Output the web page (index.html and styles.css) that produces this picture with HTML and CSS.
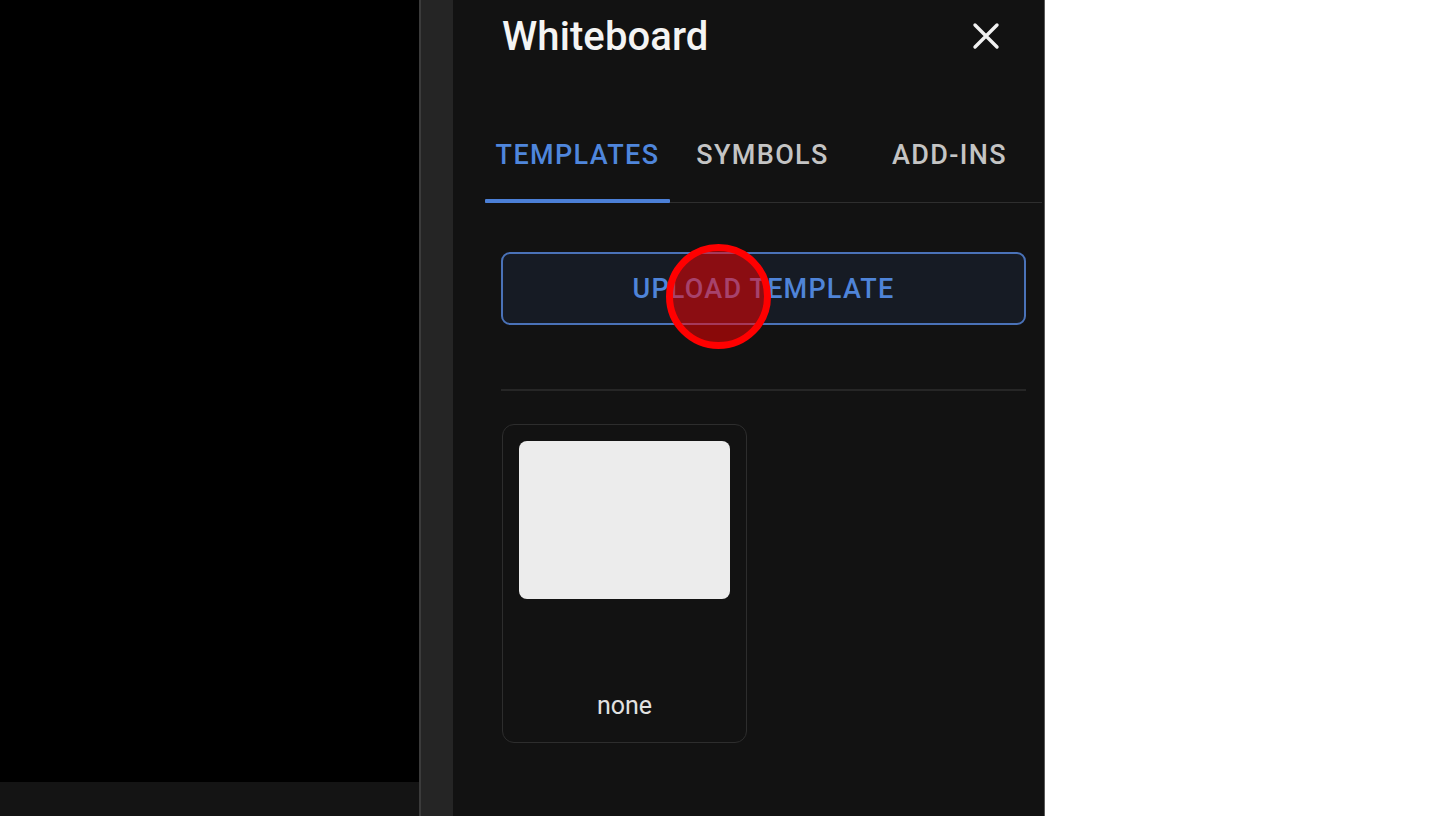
FILE: index.html
```html
<!DOCTYPE html>
<html lang="en">
<head>
<meta charset="utf-8">
<title>Whiteboard</title>
<link rel="stylesheet" href="styles.css">
</head>
<body>
<div class="app">
  <div class="stage">
    <div class="canvas"></div>
    <div class="statusbar"></div>
  </div>
  <div class="splitter"></div>
  <div class="rail"></div>
  <aside class="panel">
    <header class="panel-header">
      <h1 class="panel-title">Whiteboard</h1>
      <button class="close-btn" aria-label="Close">
        <svg viewBox="0 0 28 28" width="28" height="28"><path d="M3 3 L25 25 M25 3 L3 25" stroke="#f2f2f2" stroke-width="3.4" stroke-linecap="round" fill="none"/></svg>
      </button>
    </header>
    <nav class="tabs">
      <div class="tab active">TEMPLATES</div>
      <div class="tab">SYMBOLS</div>
      <div class="tab">ADD-INS</div>
    </nav>
    <section class="content">
      <div class="upload-wrap">
        <button class="upload-btn">UPLOAD TEMPLATE</button>
        <span class="click-marker"></span>
      </div>
      <hr class="divider">
      <div class="templates">
        <div class="template-card">
          <div class="template-thumb"></div>
          <div class="template-name">none</div>
        </div>
      </div>
    </section>
  </aside>
  <div class="blank"></div>
</div>
</body>
</html>
```

FILE: styles.css
```css
* { box-sizing: border-box; }
html, body { margin: 0; padding: 0; height: 100%; }
body {
  font-family: Roboto, "Liberation Sans", Arial, sans-serif;
  background: #ffffff;
  overflow: hidden;
}
.app {
  display: flex;
  width: 1450px;
  height: 816px;
}
.stage {
  width: 419px;
  display: flex;
  flex-direction: column;
}
.canvas { flex: 1; background: #000000; }
.statusbar { height: 34px; background: #141414; }
.splitter { width: 2px; background: #3b3b3b; }
.rail { width: 32px; background: #252525; }
.panel {
  width: 592px;
  background: #121212;
  display: flex;
  flex-direction: column;
  border-right: 1px solid #5a5a5a;
}
.panel-header {
  display: flex;
  align-items: center;
  justify-content: space-between;
  padding: 13px 44px 0 49px;
  height: 61px;
}
.panel-title {
  margin: 0;
  font-size: 40px;
  line-height: 48px;
  font-weight: 500;
  color: #f4f4f4;
  letter-spacing: 0.1px;
}
.close-btn {
  background: none;
  border: 0;
  padding: 0;
  width: 28px;
  height: 28px;
  display: flex;
  cursor: pointer;
  margin-top: -3px;
}
.tabs {
  display: flex;
  margin: 48px 2px 0 32px;
  border-bottom: 1px solid #2e2e2e;
}
.tab {
  position: relative;
  width: 185px;
  height: 93px;
  display: flex;
  align-items: center;
  justify-content: center;
  font-size: 27px;
  font-weight: 500;
  letter-spacing: 1.35px;
  color: #c4c4c4;
  padding-bottom: 2px;
}
.tab:nth-child(3) { padding-left: 4px; }
.tab.active { color: #4f86dc; }
.tab.active::after {
  content: "";
  position: absolute;
  left: 0;
  right: 0;
  bottom: -1px;
  height: 4px;
  background: #4b7fd6;
  border-radius: 1px;
}
.content {
  padding: 49px 18px 0 48px;
}
.upload-wrap { position: relative; }
.upload-btn {
  width: 100%;
  height: 73px;
  background: #161b24;
  border: 2px solid #4a72b8;
  border-radius: 9px;
  color: #4f84d8;
  font-family: Roboto, "Liberation Sans", Arial, sans-serif;
  font-size: 27px;
  font-weight: 500;
  letter-spacing: 1.2px;
  padding-top: 2px;
}
.click-marker {
  position: absolute;
  left: 165px;
  top: -8px;
  width: 105px;
  height: 105px;
  border-radius: 50%;
  border: 7px solid #ff0000;
  background: rgba(255, 0, 0, 0.5);
}
.divider {
  margin: 64px 0 0 0;
  border: 0;
  height: 2px;
  background: #262626;
}
.templates {
  display: flex;
  padding: 33px 0 0 1px;
}
.template-card {
  width: 245px;
  height: 319px;
  border: 1px solid #2d2d2d;
  border-radius: 12px;
  padding: 16px 16px 0 16px;
  display: flex;
  flex-direction: column;
  align-items: center;
}
.template-thumb {
  width: 211px;
  height: 158px;
  background: #ececec;
  border-radius: 8px;
}
.template-name {
  margin-top: 92px;
  font-size: 25px;
  color: #e2e2e2;
  line-height: 30px;
}
.blank { flex: 1; background: #ffffff; }
```
